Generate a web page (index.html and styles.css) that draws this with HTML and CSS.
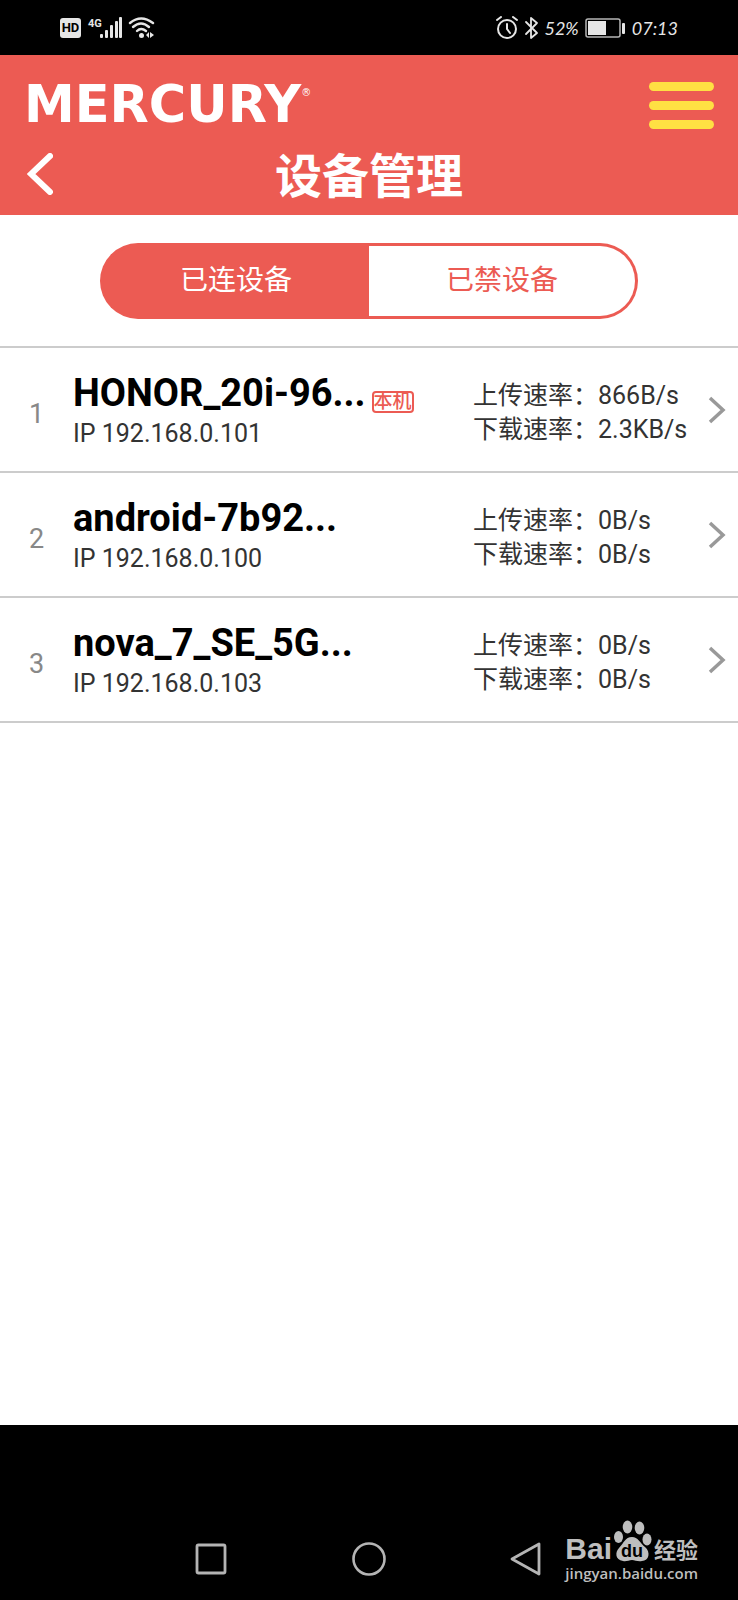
FILE: index.html
```html
<!DOCTYPE html>
<html lang="zh-CN">
<head>
    <meta charset="UTF-8">
    <meta name="viewport" content="width=device-width, initial-scale=1.0">
    <title>设备管理</title>
    <link rel="stylesheet" href="styles.css">
</head>
<body>
    <!-- 状态栏 -->
    <div class="status-bar">
        <div class="status-left">
            <span class="hd">HD</span>
            <svg class="signal" width="36" height="24" viewBox="0 0 36 24">
                <text x="1" y="11" class="net">4G</text>
                <g fill="#e6e6e6">
                    <rect x="13" y="18" width="3" height="4" rx="1"/>
                    <rect x="18" y="14" width="3" height="8" rx="1"/>
                    <rect x="23" y="9" width="3" height="13" rx="1"/>
                    <rect x="28" y="5" width="3" height="17" rx="1"/>
                    <rect x="32" y="1" width="3" height="21" rx="1"/>
                </g>
            </svg>
            <svg width="28" height="24" viewBox="0 0 28 24">
                <g fill="none" stroke="#e6e6e6" stroke-width="2.4" stroke-linecap="round">
                    <path d="M2 7Q13-2 25 7"/>
                    <path d="M5 11Q13 4 21 11"/>
                    <path d="M9 15Q13 11 18 15"/>
                </g>
                <circle cx="13.5" cy="19.5" r="2.5" fill="#e6e6e6"/>
                <path d="M21 16v6l-3-3zM22 16v6l4-3z" fill="#e6e6e6"/>
            </svg>
        </div>
        <div class="status-right">
            <svg width="22" height="24" viewBox="0 0 22 24">
                <g fill="none" stroke="#e6e6e6" stroke-width="2" stroke-linecap="round">
                    <circle cx="11" cy="13" r="9"/>
                    <path d="M11 8v5l3 4"/>
                    <path d="M1 4l4-3M21 4l-4-3"/>
                </g>
            </svg>
            <svg class="bluetooth" width="16" height="24" viewBox="0 0 16 24">
                <path d="M2 6l11 11-6 5V2l6 5L2 18" fill="none" stroke="#e6e6e6" stroke-width="1.8" stroke-linejoin="round" stroke-linecap="round"/>
            </svg>
            <span class="percent">52%</span>
            <svg class="battery" width="40" height="20" viewBox="0 0 40 20">
                <rect x="1" y="1" width="34" height="18" rx="2" fill="none" stroke="#b5b5b5" stroke-width="1.5"/>
                <rect x="3" y="3" width="18" height="14" fill="#e6e6e6"/>
                <rect x="37" y="5" width="3" height="11" rx="1" fill="#e6e6e6"/>
            </svg>
            <span class="time">07:13</span>
        </div>
    </div>

    <!-- 页头 -->
    <header class="header">
        <div class="brand-row">
            <div class="logo">MERCURY<sup>®</sup></div>
            <button type="button" class="menu-button" aria-label="菜单">
                <span></span>
                <span></span>
                <span></span>
            </button>
        </div>
        <div class="title-row">
            <button type="button" class="back-button" aria-label="返回">
                <svg width="26" height="42" viewBox="0 0 26 42">
                    <path d="M23 3L4 21l19 18" fill="none" stroke="#fff" stroke-width="6" stroke-linecap="round"/>
                </svg>
            </button>
            <h1>设备管理</h1>
        </div>
    </header>

    <!-- 设备列表 -->
    <main class="content">
        <div class="tabs">
            <button type="button" class="tab active">已连设备</button>
            <button type="button" class="tab">已禁设备</button>
        </div>
        <ul class="device-list">
            <li>
                <a class="device" href="#">
                    <span class="index">1</span>
                    <span class="info">
                        <span class="name">HONOR_20i-96...<span class="badge">本机</span></span>
                        <span class="ip">IP 192.168.0.101</span>
                    </span>
                    <span class="rates">
                        <span>上传速率：866B/s</span>
                        <span>下载速率：2.3KB/s</span>
                    </span>
                    <svg class="arrow" width="18" height="28" viewBox="0 0 18 28">
                        <path d="M2 2l13 12L2 26" fill="none" stroke="#999" stroke-width="3.5"/>
                    </svg>
                </a>
            </li>
            <li>
                <a class="device" href="#">
                    <span class="index">2</span>
                    <span class="info">
                        <span class="name">android-7b92...</span>
                        <span class="ip">IP 192.168.0.100</span>
                    </span>
                    <span class="rates">
                        <span>上传速率：0B/s</span>
                        <span>下载速率：0B/s</span>
                    </span>
                    <svg class="arrow" width="18" height="28" viewBox="0 0 18 28">
                        <path d="M2 2l13 12L2 26" fill="none" stroke="#999" stroke-width="3.5"/>
                    </svg>
                </a>
            </li>
            <li>
                <a class="device" href="#">
                    <span class="index">3</span>
                    <span class="info">
                        <span class="name">nova_7_SE_5G...</span>
                        <span class="ip">IP 192.168.0.103</span>
                    </span>
                    <span class="rates">
                        <span>上传速率：0B/s</span>
                        <span>下载速率：0B/s</span>
                    </span>
                    <svg class="arrow" width="18" height="28" viewBox="0 0 18 28">
                        <path d="M2 2l13 12L2 26" fill="none" stroke="#999" stroke-width="3.5"/>
                    </svg>
                </a>
            </li>
        </ul>
    </main>

    <!-- 系统导航栏 -->
    <nav class="nav-bar">
        <button type="button" aria-label="最近任务">
            <svg width="34" height="34" viewBox="0 0 34 34">
                <rect x="3" y="3" width="28" height="28" rx="1.5" fill="none" stroke="#b4b4b4" stroke-width="2.8"/>
            </svg>
        </button>
        <button type="button" aria-label="主页">
            <svg width="34" height="34" viewBox="0 0 34 34">
                <circle cx="17" cy="17" r="15.5" fill="none" stroke="#b4b4b4" stroke-width="2.6"/>
            </svg>
        </button>
        <button type="button" aria-label="返回">
            <svg width="34" height="34" viewBox="0 0 34 34">
                <path d="M29 2v30L2 17z" fill="none" stroke="#b4b4b4" stroke-width="2.8" stroke-linejoin="round"/>
            </svg>
        </button>
        <div class="watermark">
            <div class="wm-top">
                <span class="wm-bai">Bai</span>
                <svg width="38" height="42" viewBox="0 0 38 42">
                    <g fill="#bebebe">
                        <ellipse cx="4.5" cy="17" rx="4.5" ry="6"/>
                        <ellipse cx="13.5" cy="7" rx="4.8" ry="6.5"/>
                        <ellipse cx="25.5" cy="8" rx="4.8" ry="6.5"/>
                        <ellipse cx="33" cy="19.5" rx="4.5" ry="6"/>
                        <path d="M18 17C24 17 26 23 31 27C37 32 35 41 28 41C24 42 21 40 18 40C15 40 12 42 9 41C1 40 1 32 5 28C10 23 11 17 18 17z"/>
                    </g>
                    <text x="18" y="37" text-anchor="middle" class="wm-du">du</text>
                </svg>
                <span class="wm-cn">经验</span>
            </div>
            <div class="wm-url">jingyan.baidu.com</div>
        </div>
    </nav>
</body>
</html>
```

FILE: styles.css
```css
* {
    box-sizing: border-box;
}
body {
    margin: 0;
    min-height: 100vh;
    display: flex;
    flex-direction: column;
    background-color: #ffffff;
    color: #333333;
    font-family: Roboto, "Noto Sans CJK SC", sans-serif;
}
button {
    padding: 0;
    border: none;
    background: none;
    font-family: inherit;
    cursor: pointer;
}
svg {
    display: block;
    flex: none;
}

/* 状态栏 */
.status-bar {
    height: 55px;
    padding: 0 60px;
    display: flex;
    align-items: center;
    justify-content: space-between;
    background-color: #000000;
    color: #e6e6e6;
}
.status-left, .status-right {
    display: flex;
    align-items: center;
}
.hd {
    width: 21px;
    margin-right: 6px;
    border-radius: 3px;
    background-color: #e6e6e6;
    color: #000000;
    font-size: 13px;
    font-weight: bold;
    line-height: 20px;
    text-align: center;
}
.net {
    fill: #e6e6e6;
    font-size: 11px;
    font-weight: bold;
}
.signal {
    margin-right: 5px;
}
.bluetooth {
    margin: 0 4px 0 6px;
}
.percent, .time {
    font-family: Lato, sans-serif;
    font-size: 18px;
    font-style: italic;
}
.battery {
    margin: 0 7px 0 6px;
}

/* 页头 */
.header {
    height: 160px;
    padding: 20px 24px 0;
    background-color: #ec5b53;
    color: #ffffff;
}
.brand-row {
    display: flex;
    align-items: center;
    justify-content: space-between;
    height: 60px;
}
.logo {
    font-family: "DejaVu Sans", sans-serif;
    font-size: 51px;
    font-weight: bold;
    line-height: 64px;
    white-space: nowrap;
}
.logo sup {
    font-size: 10px;
    font-weight: normal;
    line-height: 10px;
    vertical-align: 26px;
}
.menu-button {
    width: 65px;
    display: flex;
    flex-direction: column;
    gap: 10px;
}
.menu-button span {
    height: 9px;
    border-radius: 5px;
    background-color: #ffe043;
}
.title-row {
    display: grid;
    grid-template-columns: 1fr auto 1fr;
    align-items: center;
    padding: 0 3px;
    height: 78px;
}
h1 {
    margin: 0;
    padding-top: 6px;
    font-size: 47px;
    line-height: 60px;
}
.back-button {
    justify-self: start;
}

/* 切换标签 */
.content {
    flex: 1;
}
.tabs {
    display: flex;
    height: 76px;
    margin: 28px 100px 27px;
}
.tab {
    flex: 1;
    padding-bottom: 6px;
    border: 3px solid #ec5b53;
    border-left: none;
    border-radius: 0 38px 38px 0;
    color: #ec5b53;
    font-size: 28px;
}
.tab.active {
    border-left: 3px solid #ec5b53;
    border-right: none;
    border-radius: 38px 0 0 38px;
    background-color: #ec5b53;
    color: #ffffff;
}

/* 设备列表 */
.device-list {
    margin: 0;
    padding: 0;
    list-style: none;
    border-top: 2px solid #cccccc;
}
.device {
    display: flex;
    align-items: center;
    height: 125px;
    padding-right: 12px;
    border-bottom: 2px solid #cccccc;
    color: #333333;
    text-decoration: none;
}
.index {
    width: 73px;
    padding-top: 8px;
    color: #888888;
    font-size: 27px;
    text-align: center;
}
.info {
    flex: 1;
    padding-top: 5px;
    display: flex;
    flex-direction: column;
}
.name {
    display: flex;
    align-items: center;
    color: #000000;
    font-size: 38px;
    font-weight: bold;
    line-height: 44px;
}
.ip {
    font-size: 25px;
    line-height: 38px;
}
.badge {
    margin-top: 18px;
    margin-left: 6px;
    width: 42px;
    border: 2px solid #ec5b53;
    border-radius: 4px;
    color: #ec5b53;
    font-size: 19px;
    font-weight: 500;
    line-height: 18px;
    text-align: center;
}
.rates {
    width: 235px;
    padding-top: 6px;
    display: flex;
    flex-direction: column;
    font-size: 25px;
    line-height: 34px;
    white-space: nowrap;
}

/* 系统导航栏 */
.nav-bar {
    position: relative;
    display: flex;
    justify-content: center;
    align-items: flex-end;
    gap: 124px;
    height: 175px;
    padding-bottom: 24px;
    background-color: #000000;
}
.watermark {
    position: absolute;
    right: 40px;
    bottom: 16px;
    color: #bebebe;
}
.wm-top {
    display: flex;
    align-items: flex-end;
    justify-content: space-between;
}
.wm-bai {
    font-family: "Liberation Sans", sans-serif;
    font-size: 30px;
    font-weight: bold;
    line-height: 26px;
}
.wm-du {
    fill: #000000;
    font-family: "Liberation Sans", sans-serif;
    font-size: 18px;
    font-weight: bold;
}
.wm-cn {
    font-size: 22px;
    font-weight: bold;
    line-height: 22px;
}
.wm-url {
    font-family: "Open Sans", sans-serif;
    font-size: 15px;
    font-weight: 600;
    line-height: 22px;
}
```
